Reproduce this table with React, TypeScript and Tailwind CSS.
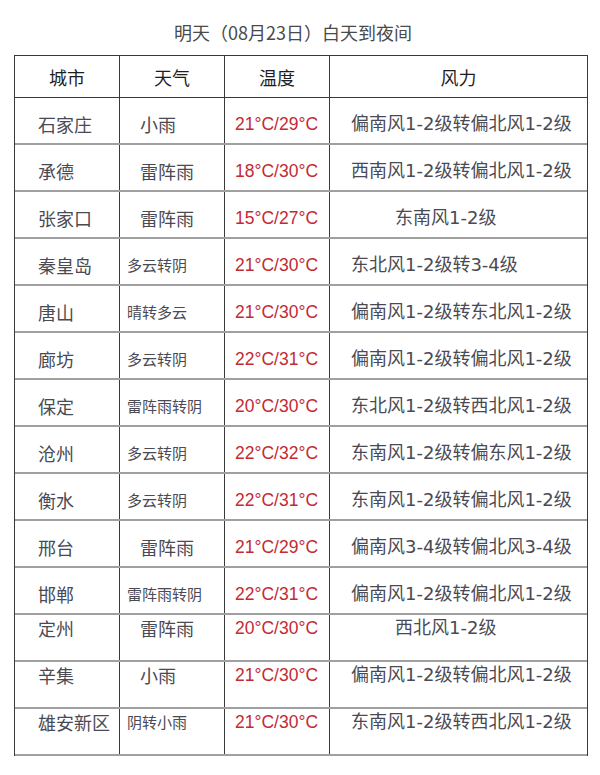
import React from "react";

type Row = {
  city: string;
  weather: string;
  small: boolean;
  temp: string;
  wind: string;
  short?: boolean;
  top?: boolean;
};

const rows: Row[] = [
  { city: "石家庄", weather: "小雨", small: false, temp: "21°C/29°C", wind: "偏南风1-2级转偏北风1-2级" },
  { city: "承德", weather: "雷阵雨", small: false, temp: "18°C/30°C", wind: "西南风1-2级转偏北风1-2级" },
  { city: "张家口", weather: "雷阵雨", small: false, temp: "15°C/27°C", wind: "东南风1-2级", short: true },
  { city: "秦皇岛", weather: "多云转阴", small: true, temp: "21°C/30°C", wind: "东北风1-2级转3-4级" },
  { city: "唐山", weather: "晴转多云", small: true, temp: "21°C/30°C", wind: "偏南风1-2级转东北风1-2级" },
  { city: "廊坊", weather: "多云转阴", small: true, temp: "22°C/31°C", wind: "偏南风1-2级转偏北风1-2级" },
  { city: "保定", weather: "雷阵雨转阴", small: true, temp: "20°C/30°C", wind: "东北风1-2级转西北风1-2级" },
  { city: "沧州", weather: "多云转阴", small: true, temp: "22°C/32°C", wind: "东南风1-2级转偏东风1-2级" },
  { city: "衡水", weather: "多云转阴", small: true, temp: "22°C/31°C", wind: "东南风1-2级转偏北风1-2级" },
  { city: "邢台", weather: "雷阵雨", small: false, temp: "21°C/29°C", wind: "偏南风3-4级转偏北风3-4级" },
  { city: "邯郸", weather: "雷阵雨转阴", small: true, temp: "22°C/31°C", wind: "偏南风1-2级转偏北风1-2级" },
  { city: "定州", weather: "雷阵雨", small: false, temp: "20°C/30°C", wind: "西北风1-2级", short: true, top: true },
  { city: "辛集", weather: "小雨", small: false, temp: "21°C/30°C", wind: "偏南风1-2级转偏北风1-2级", top: true },
  { city: "雄安新区", weather: "阴转小雨", small: true, temp: "21°C/30°C", wind: "东南风1-2级转西北风1-2级", top: true },
];

export default function App() {
  return (
    <div className="w-[600px] h-[775px] bg-white font-['Noto_Sans_CJK_SC',sans-serif] text-[#4a4a54]">
      <div className="h-[55px] pt-[20px] pr-[14px] text-center text-[18px] leading-[24px] text-[#4a4a4a]">
        明天（08月23日）白天到夜间
      </div>
      <div className="ml-[14px] w-[574px] border-t border-l border-r border-[#3a3a3a]">
        <div className="flex h-[42px] border-b border-[#3a3a3a] text-[18px] leading-[24px] text-[#1e1e1e]">
          <div className="w-[105px] border-r border-[#3a3a3a] pt-[9px] text-center">城市</div>
          <div className="w-[105px] border-r border-[#3a3a3a] pt-[9px] text-center">天气</div>
          <div className="w-[105px] border-r border-[#3a3a3a] pt-[9px] text-center">温度</div>
          <div className="w-[257px] pt-[9px] text-center">风力</div>
        </div>
        {rows.map((r) => (
          <div key={r.city} className="flex h-[47px] border-b-2 border-[#a0a0a0]">
            <div
              className={`w-[105px] border-r border-[#3a3a3a] pl-[23px] text-[18px] leading-[24px] ${
                r.top ? "pt-[1px]" : "pt-[14px]"
              }`}
            >
              {r.city}
            </div>
            <div
              className={`w-[105px] border-r border-[#3a3a3a] ${r.top ? "pt-[1px]" : "pt-[14px]"} ${
                r.small ? "pl-[7px] text-[15px] leading-[24px]" : "pl-[20px] text-[18px] leading-[24px]"
              }`}
            >
              {r.weather}
            </div>
            <div
              className={`w-[105px] border-r border-[#3a3a3a] pl-[10px] text-[17.5px] leading-[24px] font-['Liberation_Sans',sans-serif] text-[#c42a32] ${
                r.top ? "pt-[1px]" : "pt-[14px]"
              }`}
            >
              {r.temp}
            </div>
            <div
              className={`w-[257px] whitespace-nowrap text-[18px] leading-[24px] font-['DejaVu_Sans','Noto_Sans_CJK_SC',sans-serif] ${
                r.short ? "pl-[65px]" : "pl-[21px]"
              } ${r.top ? "pt-[1px]" : "pt-[14px]"}`}
            >
              {r.wind}
            </div>
          </div>
        ))}
      </div>
    </div>
  );
}
